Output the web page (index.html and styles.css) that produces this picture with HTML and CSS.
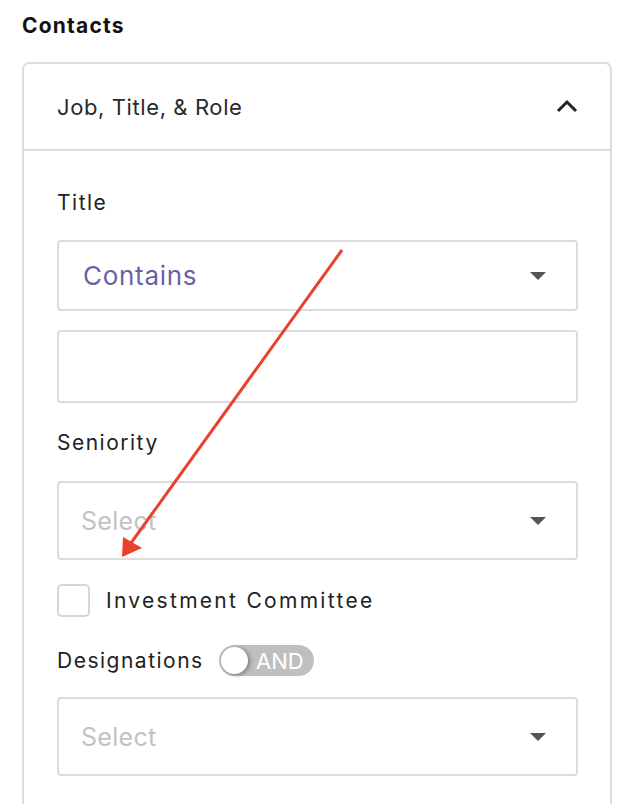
FILE: index.html
```html
<!DOCTYPE html>
<html lang="en">

<head>
  <meta charset="UTF-8">
  <meta name="viewport" content="width=device-width, initial-scale=1.0">
  <title>Contacts</title>
  <link rel="stylesheet" href="styles.css">
</head>

<body>
  <h1 class="section-title">Contacts</h1>

  <div class="card">
    <div class="card-header">
      <span>Job, Title, &amp; Role</span>
      <svg class="chevron" width="22" height="14" viewBox="0 0 22 14">
        <path d="M2 12 L11 3 L20 12" fill="none" stroke="#222" stroke-width="3" />
      </svg>
    </div>

    <div class="card-body">
      <label class="field-label">Title</label>
      <div class="select">
        <span class="select-value">Contains</span>
        <span class="caret"></span>
      </div>
      <div class="text-input"></div>

      <label class="field-label seniority">Seniority</label>
      <div class="select tall">
        <span class="placeholder">Select</span>
        <span class="caret"></span>
      </div>

      <div class="check-row">
        <span class="checkbox"></span>
        <span class="check-text">Investment Committee</span>
      </div>

      <div class="toggle-row">
        <label class="field-label">Designations</label>
        <div class="toggle">
          <span class="knob"></span>
          <span class="toggle-text">AND</span>
        </div>
      </div>
      <div class="select tall">
        <span class="placeholder">Select</span>
        <span class="caret"></span>
      </div>
    </div>
  </div>

  <!-- annotation arrow -->
  <svg class="annotation" width="640" height="804" viewBox="0 0 640 804">
    <line x1="342" y1="250" x2="131" y2="543" stroke="#e8412c" stroke-width="3" />
    <polygon points="122,557 123,537 142,548" fill="#e8412c" />
  </svg>
</body>

</html>
```

FILE: styles.css
```css
* {
  box-sizing: border-box;
}

body {
  margin: 0;
  background: #fff;
  font-family: "Inter", "Noto Sans", sans-serif;
  color: #222;
  overflow: hidden;
}

.section-title {
  margin: 13px 0 0 22px;
  font-size: 21px;
  font-weight: 700;
  letter-spacing: 1.2px;
  line-height: 26px;
  color: #111;
}

.card {
  margin: 23px 28px 0 22px;
  height: 800px;
  border: 2px solid #dcdcdc;
  border-bottom: none;
  border-radius: 7px 7px 0 0;
}

.card-header {
  height: 87px;
  display: flex;
  align-items: center;
  justify-content: space-between;
  padding: 0 32px 0 33px;
  border-bottom: 2px solid #dcdcdc;
  font-size: 22px;
  letter-spacing: 0.6px;
  color: #2a2a2a;
}

.chevron {
  margin-top: -2px;
}

.card-body {
  padding: 0 32px 0 33px;
}

.field-label {
  display: block;
  font-size: 21px;
  letter-spacing: 1.5px;
  color: #222;
  line-height: 24px;
}

.card-body > .field-label:first-child {
  margin-top: 40px;
}

.select,
.text-input {
  height: 71px;
  border: 2px solid #dcdcdc;
  border-radius: 4px;
  display: flex;
  align-items: center;
  justify-content: space-between;
  padding: 0 30px 0 24px;
}

.select {
  margin-top: 25px;
}

.text-input {
  margin-top: 19px;
  height: 73px;
}

.select.tall {
  height: 79px;
  padding-left: 22px;
}

.select-value {
  font-size: 26px;
  letter-spacing: 0.7px;
  color: #6a5fa8;
}

.placeholder {
  font-size: 25px;
  letter-spacing: 0.3px;
  color: #c2c2c2;
}

.caret {
  width: 0;
  height: 0;
  border-left: 8px solid transparent;
  border-right: 8px solid transparent;
  border-top: 8px solid #555;
}

.seniority {
  margin-top: 28px;
}

.seniority + .select {
  margin-top: 26px;
}

.check-row {
  display: flex;
  align-items: center;
  margin-top: 24px;
}

.checkbox {
  width: 33px;
  height: 33px;
  border: 2px solid #d6d6d6;
  border-radius: 5px;
}

.check-text {
  margin-left: 16px;
  font-size: 21px;
  letter-spacing: 2.3px;
  color: #222;
}

.toggle-row {
  display: flex;
  align-items: center;
  margin-top: 28px;
}

.toggle {
  position: relative;
  margin-left: 15px;
  width: 95px;
  height: 31px;
  border-radius: 16px;
  background: #bfbfbf;
  display: flex;
  align-items: center;
  justify-content: flex-end;
  padding-right: 10px;
}

.knob {
  position: absolute;
  left: 2px;
  top: 2px;
  width: 27px;
  height: 27px;
  border-radius: 50%;
  background: #fff;
  box-shadow: 2px 1px 4px rgba(0, 0, 0, 0.35);
}

.toggle-text {
  font-size: 22px;
  color: #fff;
}

.toggle-row + .select {
  margin-top: 21px;
}

.annotation {
  position: absolute;
  left: 0;
  top: 0;
  pointer-events: none;
}
```
